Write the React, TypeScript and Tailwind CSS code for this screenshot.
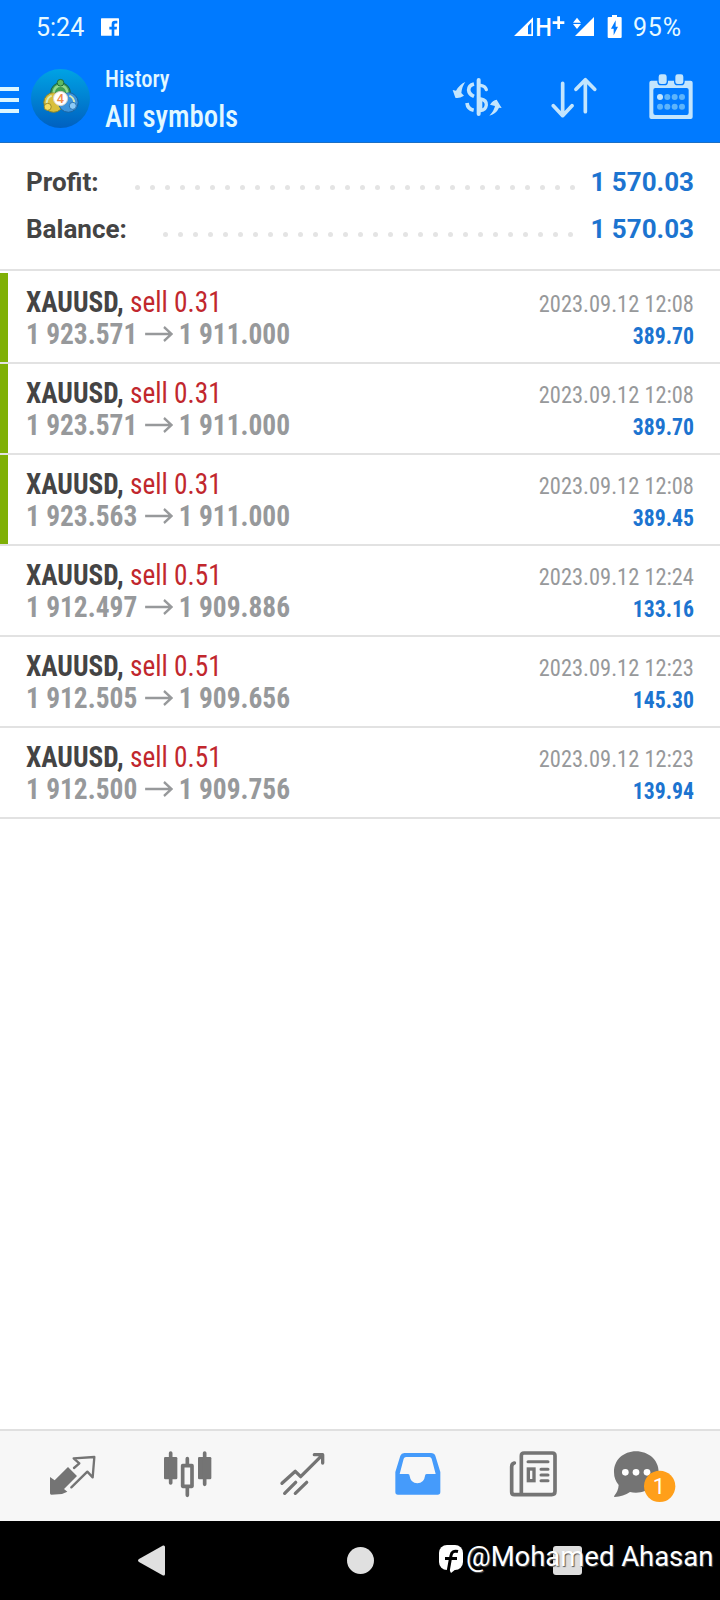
import React from 'react';

const trades = [
  { lot: '0.31', open: '1 923.571', close: '1 911.000', date: '2023.09.12 12:08', profit: '389.70', tp: true },
  { lot: '0.31', open: '1 923.571', close: '1 911.000', date: '2023.09.12 12:08', profit: '389.70', tp: true },
  { lot: '0.31', open: '1 923.563', close: '1 911.000', date: '2023.09.12 12:08', profit: '389.45', tp: true },
  { lot: '0.51', open: '1 912.497', close: '1 909.886', date: '2023.09.12 12:24', profit: '133.16', tp: false },
  { lot: '0.51', open: '1 912.505', close: '1 909.656', date: '2023.09.12 12:23', profit: '145.30', tp: false },
  { lot: '0.51', open: '1 912.500', close: '1 909.756', date: '2023.09.12 12:23', profit: '139.94', tp: false },
];

const StatusBar = () => (
  <div className="flex h-[52px] items-center pl-[36px] pr-[38px] text-[25px] text-[#e6f9ff]">
    <span className="mt-1 w-[49px] leading-8">5:24</span>
    <svg className="ml-4 mt-0.5 h-[18px] w-[18px]" viewBox="303 53 54 53">
      <path
        fill="#fff"
        fillRule="evenodd"
        d="M305 53h50q2 0 2 2v49q0 2-2 2h-12V87h7l1-8h-8v-6q0-4 4-4h5v-8h-8q-9 0-9 10v8h-7v8h7v19h-30q-2 0-2-2V55q0-2 2-2z"
      />
    </svg>
    <svg className="ml-auto h-6 w-[108px] overflow-visible" viewBox="462 42 324 72" fill="#fff">
      <path fillRule="evenodd" d="M519 52v56h-57zM514 66v37h-10V78z" />
      <text x="526" y="108" fontSize="79" fontWeight="500" textLength="50" lengthAdjust="spacingAndGlyphs">
        H
      </text>
      <path d="M592 49h8v15h13v8h-13v15h-8V72h-14v-8h14z" />
      <path d="M702 51v57h-57zM639 68l12-15 12 15zM639 72h24l-12 15z" />
      <path
        fillRule="evenodd"
        d="M756 45h15v6h11q3 0 3 3v57q0 3-3 3h-36q-3 0-3-3V54q0-3 3-3h10zM767 61l-14 25h8v20l13-26h-7z"
      />
    </svg>
    <span className="ml-[11px] mt-1 w-[49px] leading-8 tracking-[0.8px]">95%</span>
  </div>
);

const AppLogo = () => (
  <svg className="ml-3 mt-0.5 h-[59px] w-[59px]" viewBox="0 0 60 60">
    <defs>
      <linearGradient id="sky" x1="0" y1="0" x2="0" y2="1">
        <stop offset="0" stopColor="#00a3e4" />
        <stop offset="1" stopColor="#0060c0" />
      </linearGradient>
    </defs>
    <circle cx="30" cy="30" r="30" fill="url(#sky)" />
    <circle cx="30" cy="24" r="10" fill="#3f9f52" stroke="#1c5f44" />
    <circle cx="23" cy="34" r="10" fill="#d9bf3c" stroke="#7f7f30" />
    <circle cx="38" cy="34" r="10" fill="#3f95dc" stroke="#17629f" />
    <path d="M23 24q1-7 7-7t7 7" fill="none" stroke="#93d68c" strokeWidth="2.5" />
    <path d="M16 35q0-6 5-8M44 35q0-6-5-8" fill="none" stroke="#d6e9b8" strokeWidth="2" />
    <circle cx="30" cy="14" r="3.400" fill="#5fba62" stroke="#1f6b3d" />
    <circle cx="17" cy="38.500" r="3.600" fill="#f4dd62" stroke="#9a8a2a" />
    <circle cx="42.500" cy="37.500" r="3.600" fill="#8ccbf7" stroke="#2a72b0" />
    <circle cx="30" cy="30" r="7.200" fill="#fff" stroke="#d9d2c8" />
    <text x="30" y="34.800" fontSize="13" fontWeight="500" textAnchor="middle" fill="#f08a48">
      4
    </text>
  </svg>
);

const Header = () => (
  <div className="flex h-[90px] items-center pr-[27px]">
    <div className="mt-1.5 flex w-[19px] flex-col gap-[7px]">
      <div className="h-1 bg-[#dcf6ff]" />
      <div className="h-1 bg-[#dcf6ff]" />
      <div className="h-1 bg-[#dcf6ff]" />
    </div>
    <AppLogo />
    <div className="ml-[15px] flex-1 font-['Roboto_Condensed'] font-medium text-[#e2f8ff]">
      <p className="origin-left scale-x-[0.94] text-2xl leading-[38px]">History</p>
      <p className="origin-left scale-x-[0.9] text-[32px] leading-[37px]">All symbols</p>
    </div>
    <svg className="h-[46px] w-[50px]" viewBox="276 222 150 138" fill="none" stroke="#c3e5fd" strokeLinecap="round">
      <path strokeWidth="12" d="M356 240v102" />
      <path strokeWidth="10" d="M362 256q14 2 17 13M362 297q18 3 17 18-2 15-17 17M362 297v34" />
      <path strokeWidth="11" strokeLinecap="butt" d="M342 252q-16 4-16 18 1 13 16 19M321 309q2 18 20 22" />
      <path fill="#c3e5fd" stroke="none" d="M316 246q-16 6-28 26l-10-2 8 23q11 3 26-6l-8-8q2-20 12-33zM388 347q14-14 17-29l-15-4q8-14 20-15l15 25-8-1q-8 18-29 24z" />
    </svg>
    <svg
      className="ml-[49px] h-[46px] w-[46px]"
      viewBox="573 222 138 138"
      fill="none"
      stroke="#c3e5fd"
      strokeWidth="11"
      strokeLinecap="round"
      strokeLinejoin="round"
    >
      <path d="M608 250v96M580 317l28 30 28-30M676 335v-94M648 268l28-29 28 29" />
    </svg>
    <svg className="ml-[52px] h-[46px] w-11" viewBox="867 222 132 138" fill="#c3e5fd">
      <path
        fillRule="evenodd"
        d="M874 242h118q6 0 6 6v103q0 6-6 6H874q-6 0-6-6V248q0-6 6-6zM886 264q-6 0-6 6v68q0 7 6 7h94q6 0 6-7v-68q0-6-6-6z"
      />
      <rect x="894" y="221" width="28" height="33" rx="9" stroke="#007aff" strokeWidth="4" />
      <rect x="944" y="221" width="28" height="33" rx="9" stroke="#007aff" strokeWidth="4" />
      <circle cx="900" cy="291" r="9" />
      <g fill="#5db4fb">
        <circle cx="922" cy="291" r="9" />
        <circle cx="944" cy="291" r="9" />
        <circle cx="966" cy="291" r="9" />
        <circle cx="900" cy="320" r="9" />
        <circle cx="922" cy="320" r="9" />
        <circle cx="944" cy="320" r="9" />
        <circle cx="966" cy="320" r="9" />
      </g>
    </svg>
  </div>
);

const SummaryRow = ({ label, value, dots }: { label: string; value: string; dots: number }) => (
  <div className="flex h-[47px] items-center text-[26px]">
    <span className="font-bold text-[#444]">{label}</span>
    <div className={`mt-2.5 ml-auto flex justify-between ${dots === 30 ? 'w-[440px]' : 'mr-0.5 w-[410px]'}`}>
      {Array.from({ length: dots }, (_, i) => (
        <span key={i} className="h-[5px] w-[5px] rounded-full bg-[#e4e4e4]" />
      ))}
    </div>
    <span className="ml-[15px] w-[104px] text-right font-bold text-[#1c74d0]">{value}</span>
  </div>
);

const TradeRow = ({ trade }: { trade: (typeof trades)[number] }) => (
  <div className="flex h-[91px] border-b-2 border-[#e2e2e2] font-['Roboto_Condensed']">
    <div className={`w-2 ${trade.tp ? 'bg-[#7fb006]' : ''}`} />
    <div className="flex flex-1 justify-between pl-[18px] pr-[26px] leading-8">
      <div className="pt-[13px] text-[30px]">
        <p className="origin-left scale-x-[0.91] whitespace-nowrap">
          <span className="font-bold text-[#444]">XAUUSD,</span> <span className="text-[#c1272d]">sell {trade.lot}</span>
        </p>
        <p className="flex origin-left scale-x-[0.945] items-center whitespace-nowrap text-[29px] font-bold text-[#97999b]">
          {trade.open}
          <svg className="ml-2 mr-1.5 h-4 w-[30px]" viewBox="0 0 30 16" fill="none" stroke="#97999b" strokeWidth="2.400">
            <path d="M0 8h28M20 1l8 7-8 7" />
          </svg>
          {trade.close}
        </p>
      </div>
      <div className="pt-[15px] text-right text-2xl leading-8">
        <p className="origin-right scale-x-[0.935] text-[#97999b]">{trade.date}</p>
        <p className="origin-right scale-x-[0.905] font-bold text-[#1c74d0]">{trade.profit}</p>
      </div>
    </div>
  </div>
);

const TabBar = () => (
  <div className="flex h-[92px] items-center border-t-2 border-[#e0e0e0] bg-[#f7f7f7] px-[15px] *:h-[50px] *:flex-1">
    <svg viewBox="142.5 93 150 150" fill="#747474">
      <path d="M150 171l14 10 40-40 27 27-39 39 10 8-16 7-32 2q-4 0-4-4z" />
      <path fill="none" stroke="#747474" strokeWidth="7" strokeLinejoin="round" strokeLinecap="round" d="M222 144l16-14-17-15 62-4-5 61-16-17-48 47" />
    </svg>
    <svg viewBox="487.5 93 150 150" fill="#747474">
      <rect x="492" y="111" width="40" height="67" rx="4" />
      <rect x="594" y="111" width="40" height="67" rx="4" />
      <path fill="none" stroke="#747474" strokeWidth="11" strokeLinecap="round" d="M512 99v90M614 99v94M562 116v16M562 204v22" />
      <rect x="548" y="137" width="28" height="62" fill="none" stroke="#747474" strokeWidth="11" strokeLinejoin="round" />
    </svg>
    <svg viewBox="832.5 93 150 150" fill="none" stroke="#747474" strokeWidth="10" strokeLinecap="round" strokeLinejoin="round">
      <path d="M846 190l40-36 16 16 64-64M943 104h25v25M854 220l33-33M886 220l34-33" />
    </svg>
    <svg viewBox="97.500 93 150 150">
      <path
        fill="#459bfb"
        fillRule="evenodd"
        d="M133 99h80q10 0 13 8l15 49v60q0 8-8 8H114q-8 0-8-8v-60l15-49q3-8 12-8zM138 111q-5 0-7 5l-12 46h25q5 0 5 6 3 22 23 22t23-22q0-6 5-6h27l-12-46q-2-5-7-5z"
      />
    </svg>
    <svg viewBox="442.5 93 150 150" fill="none" stroke="#747474" strokeWidth="11" strokeLinecap="round">
      <path d="M585 107v107q0 10-10 10H463q-8 0-8-8v-76q0-9 8-11M484 222V107q0-8 8-8h85q8 0 8 8" />
      <path strokeWidth="9" d="M504 125h60M543 148h21M543 165h21M543 182h21" />
      <rect x="505" y="147" width="17" height="35" strokeWidth="10" />
    </svg>
    <svg className="overflow-visible" viewBox="787.5 93 150 150">
      <path fill="#747474" d="M828 94c38 0 68 26 68 62s-30 62-68 62q-10 0-18-2-20 14-46 15-4-1-1-4 12-14 13-32-14-16-14-39c0-36 28-62 66-62z" />
      <circle cx="796" cy="157" r="10" fill="#fff" />
      <circle cx="828" cy="157" r="10" fill="#fff" />
      <circle cx="861" cy="157" r="10" fill="#fff" />
      <circle cx="899" cy="199" r="47" fill="#ff9f1a" />
      <text x="897" y="223" fontSize="66" textAnchor="middle" fill="#fff">
        1
      </text>
    </svg>
  </div>
);

const SystemNav = () => (
  <div className="relative flex h-[79px] items-center bg-black pl-[138px]">
    <svg className="h-[31px] w-[27px]" viewBox="0 0 27 31">
      <path fill="#e0e0e0" d="M1 14L25 .500q2-.5 2 1.500v27q0 2-2 1.500L1 17q-2-1.500 0-3z" />
    </svg>
    <div className="ml-[182px] h-[27px] w-[27px] rounded-full bg-[#e0e0e0]" />
    <div className="ml-[179px] h-[29px] w-[29px] rounded-[3px] bg-[#dedede]" />
    <div className="absolute left-[439px] top-5 flex items-center gap-[3px] text-white">
      <svg className="mt-1 h-7 w-6" viewBox="0 0 24 28">
        <rect width="24" height="25" rx="8" fill="#fff" />
        <path fill="#fff" d="M10 24h7l-5 4z" />
        <path fill="none" stroke="#000" strokeWidth="3" d="M19 6.500q-6-1.500-7 4L9 27M6 13.500h12" />
      </svg>
      <span className="origin-left scale-x-[0.98] whitespace-nowrap text-[28px] leading-7 [text-shadow:1px_1px_1px_#555]">
        @Mohamed Ahasan
      </span>
    </div>
  </div>
);

export default function App() {
  return (
    <div className="flex h-[1600px] w-[720px] flex-col overflow-hidden bg-white font-[Roboto,sans-serif]">
      <div className="h-[143px] border-b border-[#1c6fc4] bg-[#007aff]">
        <StatusBar />
        <Header />
      </div>
      <div className="mb-0.5 h-32 border-b-2 border-[#e2e2e2] px-[26px] pt-4">
        <SummaryRow label="Profit:" value="1 570.03" dots={30} />
        <SummaryRow label="Balance:" value="1 570.03" dots={28} />
      </div>
      <div className="flex-1">
        {trades.map((trade, i) => (
          <TradeRow key={i} trade={trade} />
        ))}
      </div>
      <TabBar />
      <SystemNav />
    </div>
  );
}
